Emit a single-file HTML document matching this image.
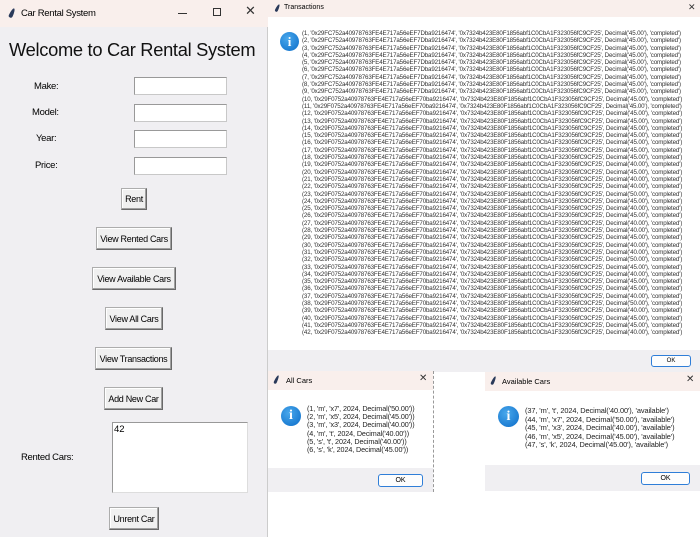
<!DOCTYPE html>
<html><head><meta charset="utf-8">
<style>
*{margin:0;padding:0;box-sizing:border-box}
body{width:700px;height:537px;position:relative;background:#fff;font-family:"Liberation Sans",sans-serif;overflow:hidden;color:#000}
.abs{position:absolute}
.tb{background:#f9efec}
.btn{position:absolute;background:#f0f0f0;border:1px solid #adadad;border-right-color:#696969;border-bottom-color:#696969;box-shadow:inset -1px -1px 0 #a0a0a0,inset 1px 1px 0 #fff;font-size:9px;display:flex;align-items:center;justify-content:center;letter-spacing:-0.3px;white-space:nowrap}
.ent{position:absolute;background:#fff;border:1px solid #c8c8c8;border-top-color:#999;border-left-color:#999}
.lbl{position:absolute;font-size:9.5px;letter-spacing:-0.3px}
.feather{position:absolute;width:4px;height:10px;background:#2a3a5a;border-radius:50% 50% 50% 50%/80% 80% 20% 20%;transform:rotate(25deg)}
.info{position:absolute;border-radius:50%;background:radial-gradient(circle at 40% 35%,#49a8ec,#0b6cc8);color:#fff;font-family:"Liberation Serif",serif;font-weight:bold;display:flex;align-items:center;justify-content:center}
.ok{position:absolute;background:#fdfdfd;border:1.5px solid #2f7ed8;border-radius:3px;font-size:7px;display:flex;align-items:center;justify-content:center}
.tx{position:absolute;left:302px;top:30px;font-size:6.2px;line-height:7.3px;letter-spacing:-0.15px;white-space:pre;color:#333}
.msg{position:absolute;font-size:7.2px;line-height:8.2px;white-space:pre;color:#222;letter-spacing:-0.1px}
</style></head><body>

<div class="abs" style="left:0;top:0;width:268px;height:537px;background:#f0eff2;border-right:1px solid #ccc"></div>
<div class="abs tb" style="left:0;top:0;width:268px;height:27px"></div>
<div class="feather" style="left:10px;top:8px"></div>
<div class="abs" style="left:21px;top:8px;font-size:9.5px;letter-spacing:-0.3px">Car Rental System</div>
<div class="abs" style="left:178px;top:13px;width:9px;height:1px;background:#333"></div>
<div class="abs" style="left:213px;top:8px;width:8px;height:8px;border:1px solid #333"></div>
<div class="abs" style="left:245px;top:3px;font-size:13px;color:#333">✕</div>
<div class="abs" style="left:9px;top:39px;font-size:18.3px;letter-spacing:-0.3px;color:#111">Welcome to Car Rental System</div>

<div class="lbl" style="left:34px;top:81px">Make:</div>
<div class="lbl" style="left:32px;top:107px">Model:</div>
<div class="lbl" style="left:36px;top:133px">Year:</div>
<div class="lbl" style="left:35px;top:160px">Price:</div>
<div class="ent" style="left:134px;top:77px;width:93px;height:18px"></div>
<div class="ent" style="left:134px;top:104px;width:93px;height:18px"></div>
<div class="ent" style="left:134px;top:130px;width:93px;height:18px"></div>
<div class="ent" style="left:134px;top:157px;width:93px;height:18px"></div>

<div class="btn" style="left:121px;top:188px;width:26px;height:22px">Rent</div>
<div class="btn" style="left:96px;top:227px;width:76px;height:23px">View Rented Cars</div>
<div class="btn" style="left:92px;top:267px;width:84px;height:23px">View Available Cars</div>
<div class="btn" style="left:105px;top:307px;width:58px;height:23px">View All Cars</div>
<div class="btn" style="left:95px;top:347px;width:77px;height:23px">View Transactions</div>
<div class="btn" style="left:104px;top:387px;width:59px;height:23px">Add New Car</div>
<div class="lbl" style="left:21px;top:452px">Rented Cars:</div>
<div class="ent" style="left:112px;top:422px;width:136px;height:71px;border-color:#999 #ddd #ddd #999"></div>
<div class="abs" style="left:114px;top:424px;font-size:9.5px">42</div>
<div class="btn" style="left:109px;top:507px;width:50px;height:23px">Unrent Car</div>

<div class="abs" style="left:268px;top:0;width:432px;height:372px;background:#fff"></div>
<div class="abs tb" style="left:268px;top:0;width:432px;height:17px"></div>
<div class="feather" style="left:276px;top:4px;width:3px;height:8px"></div>
<div class="abs" style="left:284px;top:4px;font-size:7px">Transactions</div>
<div class="abs" style="left:688px;top:2px;font-size:9px;color:#333">✕</div>
<div class="info" style="left:280px;top:32px;width:19px;height:19px;font-size:13px">i</div>
<div class="tx">(1, '0x29FC752a40978763FE4E717a56eEF7Dba9216474', '0x7324b423E80F1856abf1C0CbA1F323056fC9CF25', Decimal('45.00'), 'completed')
(2, '0x29FC752a40978763FE4E717a56eEF7Dba9216474', '0x7324b423E80F1856abf1C0CbA1F323056fC9CF25', Decimal('45.00'), 'completed')
(3, '0x29FC752a40978763FE4E717a56eEF7Dba9216474', '0x7324b423E80F1856abf1C0CbA1F323056fC9CF25', Decimal('45.00'), 'completed')
(4, '0x29FC752a40978763FE4E717a56eEF7Dba9216474', '0x7324b423E80F1856abf1C0CbA1F323056fC9CF25', Decimal('45.00'), 'completed')
(5, '0x29FC752a40978763FE4E717a56eEF7Dba9216474', '0x7324b423E80F1856abf1C0CbA1F323056fC9CF25', Decimal('45.00'), 'completed')
(6, '0x29FC752a40978763FE4E717a56eEF7Dba9216474', '0x7324b423E80F1856abf1C0CbA1F323056fC9CF25', Decimal('45.00'), 'completed')
(7, '0x29FC752a40978763FE4E717a56eEF7Dba9216474', '0x7324b423E80F1856abf1C0CbA1F323056fC9CF25', Decimal('45.00'), 'completed')
(8, '0x29FC752a40978763FE4E717a56eEF7Dba9216474', '0x7324b423E80F1856abf1C0CbA1F323056fC9CF25', Decimal('45.00'), 'completed')
(9, '0x29FC752a40978763FE4E717a56eEF7Dba9216474', '0x7324b423E80F1856abf1C0CbA1F323056fC9CF25', Decimal('45.00'), 'completed')
(10, '0x29F0752a40978763FE4E717a56eEF70ba9216474', '0x7324b423E80F1856abf1C0CbA1F323056fC9CF25', Decimal('45.00'), 'completed')
(11, '0x29F0752a40978763FE4E717a56eEF70ba9216474', '0x7324b423E80F1856abf1C0CbA1F323056fC9CF25', Decimal('45.00'), 'completed')
(12, '0x29F0752a40978763FE4E717a56eEF70ba9216474', '0x7324b423E80F1856abf1C0CbA1F323056fC9CF25', Decimal('45.00'), 'completed')
(13, '0x29F0752a40978763FE4E717a56eEF70ba9216474', '0x7324b423E80F1856abf1C0CbA1F323056fC9CF25', Decimal('45.00'), 'completed')
(14, '0x29F0752a40978763FE4E717a56eEF70ba9216474', '0x7324b423E80F1856abf1C0CbA1F323056fC9CF25', Decimal('45.00'), 'completed')
(15, '0x29F0752a40978763FE4E717a56eEF70ba9216474', '0x7324b423E80F1856abf1C0CbA1F323056fC9CF25', Decimal('45.00'), 'completed')
(16, '0x29F0752a40978763FE4E717a56eEF70ba9216474', '0x7324b423E80F1856abf1C0CbA1F323056fC9CF25', Decimal('45.00'), 'completed')
(17, '0x29F0752a40978763FE4E717a56eEF70ba9216474', '0x7324b423E80F1856abf1C0CbA1F323056fC9CF25', Decimal('45.00'), 'completed')
(18, '0x29F0752a40978763FE4E717a56eEF70ba9216474', '0x7324b423E80F1856abf1C0CbA1F323056fC9CF25', Decimal('45.00'), 'completed')
(19, '0x29F0752a40978763FE4E717a56eEF70ba9216474', '0x7324b423E80F1856abf1C0CbA1F323056fC9CF25', Decimal('40.00'), 'completed')
(20, '0x29F0752a40978763FE4E717a56eEF70ba9216474', '0x7324b423E80F1856abf1C0CbA1F323056fC9CF25', Decimal('45.00'), 'completed')
(21, '0x29F0752a40978763FE4E717a56eEF70ba9216474', '0x7324b423E80F1856abf1C0CbA1F323056fC9CF25', Decimal('40.00'), 'completed')
(22, '0x29F0752a40978763FE4E717a56eEF70ba9216474', '0x7324b423E80F1856abf1C0CbA1F323056fC9CF25', Decimal('40.00'), 'completed')
(23, '0x29F0752a40978763FE4E717a56eEF70ba9216474', '0x7324b423E80F1856abf1C0CbA1F323056fC9CF25', Decimal('50.00'), 'completed')
(24, '0x29F0752a40978763FE4E717a56eEF70ba9216474', '0x7324b423E80F1856abf1C0CbA1F323056fC9CF25', Decimal('45.00'), 'completed')
(25, '0x29F0752a40978763FE4E717a56eEF70ba9216474', '0x7324b423E80F1856abf1C0CbA1F323056fC9CF25', Decimal('40.00'), 'completed')
(26, '0x29F0752a40978763FE4E717a56eEF70ba9216474', '0x7324b423E80F1856abf1C0CbA1F323056fC9CF25', Decimal('45.00'), 'completed')
(27, '0x29F0752a40978763FE4E717a56eEF70ba9216474', '0x7324b423E80F1856abf1C0CbA1F323056fC9CF25', Decimal('40.00'), 'completed')
(28, '0x29F0752a40978763FE4E717a56eEF70ba9216474', '0x7324b423E80F1856abf1C0CbA1F323056fC9CF25', Decimal('40.00'), 'completed')
(29, '0x29F0752a40978763FE4E717a56eEF70ba9216474', '0x7324b423E80F1856abf1C0CbA1F323056fC9CF25', Decimal('45.00'), 'completed')
(30, '0x29F0752a40978763FE4E717a56eEF70ba9216474', '0x7324b423E80F1856abf1C0CbA1F323056fC9CF25', Decimal('40.00'), 'completed')
(31, '0x29F0752a40978763FE4E717a56eEF70ba9216474', '0x7324b423E80F1856abf1C0CbA1F323056fC9CF25', Decimal('40.00'), 'completed')
(32, '0x29F0752a40978763FE4E717a56eEF70ba9216474', '0x7324b423E80F1856abf1C0CbA1F323056fC9CF25', Decimal('50.00'), 'completed')
(33, '0x29F0752a40978763FE4E717a56eEF70ba9216474', '0x7324b423E80F1856abf1C0CbA1F323056fC9CF25', Decimal('45.00'), 'completed')
(34, '0x29F0752a40978763FE4E717a56eEF70ba9216474', '0x7324b423E80F1856abf1C0CbA1F323056fC9CF25', Decimal('40.00'), 'completed')
(35, '0x29F0752a40978763FE4E717a56eEF70ba9216474', '0x7324b423E80F1856abf1C0CbA1F323056fC9CF25', Decimal('45.00'), 'completed')
(36, '0x29F0752a40978763FE4E717a56eEF70ba9216474', '0x7324b423E80F1856abf1C0CbA1F323056fC9CF25', Decimal('45.00'), 'completed')
(37, '0x29F0752a40978763FE4E717a56eEF70ba9216474', '0x7324b423E80F1856abf1C0CbA1F323056fC9CF25', Decimal('40.00'), 'completed')
(38, '0x29F0752a40978763FE4E717a56eEF70ba9216474', '0x7324b423E80F1856abf1C0CbA1F323056fC9CF25', Decimal('50.00'), 'completed')
(39, '0x29F0752a40978763FE4E717a56eEF70ba9216474', '0x7324b423E80F1856abf1C0CbA1F323056fC9CF25', Decimal('40.00'), 'completed')
(40, '0x29F0752a40978763FE4E717a56eEF70ba9216474', '0x7324b423E80F1856abf1C0CbA1F323056fC9CF25', Decimal('45.00'), 'completed')
(41, '0x29F0752a40978763FE4E717a56eEF70ba9216474', '0x7324b423E80F1856abf1C0CbA1F323056fC9CF25', Decimal('45.00'), 'completed')
(42, '0x29F0752a40978763FE4E717a56eEF70ba9216474', '0x7324b423E80F1856abf1C0CbA1F323056fC9CF25', Decimal('40.00'), 'completed')</div>
<div class="abs" style="left:268px;top:350px;width:432px;height:22px;background:#f0eff2"></div>
<div class="ok" style="left:651px;top:355px;width:40px;height:12px;font-size:6px">OK</div>

<div class="abs" style="left:268px;top:371px;width:166px;height:121px;background:#fff;border-right:1px dashed #999"></div>
<div class="abs tb" style="left:268px;top:371px;width:165px;height:19px"></div>
<div class="feather" style="left:275px;top:375px;width:3px;height:9px"></div>
<div class="abs" style="left:286px;top:376px;font-size:7.5px">All Cars</div>
<div class="abs" style="left:419px;top:373px;font-size:10px;color:#333">✕</div>
<div class="info" style="left:281px;top:406px;width:20px;height:20px;font-size:14px">i</div>
<div class="msg" style="left:307px;top:405px">(1, 'm', 'x7', 2024, Decimal('50.00'))
(2, 'm', 'x5', 2024, Decimal('45.00'))
(3, 'm', 'x3', 2024, Decimal('40.00'))
(4, 'm', 't', 2024, Decimal('40.00'))
(5, 's', 't', 2024, Decimal('40.00'))
(6, 's', 'k', 2024, Decimal('45.00'))</div>
<div class="abs" style="left:268px;top:468px;width:165px;height:24px;background:#f0eff2"></div>
<div class="ok" style="left:378px;top:474px;width:45px;height:13px">OK</div>

<div class="abs" style="left:485px;top:372px;width:215px;height:119px;background:#fff"></div>
<div class="abs tb" style="left:485px;top:372px;width:215px;height:19px"></div>
<div class="feather" style="left:492px;top:376px;width:3px;height:9px"></div>
<div class="abs" style="left:502px;top:377px;font-size:7.5px">Available Cars</div>
<div class="abs" style="left:686px;top:374px;font-size:10px;color:#333">✕</div>
<div class="info" style="left:498px;top:406px;width:21px;height:21px;font-size:14px">i</div>
<div class="msg" style="left:525px;top:407px;line-height:8.6px;font-size:7.4px">(37, 'm', 't', 2024, Decimal('40.00'), 'available')
(44, 'm', 'x7', 2024, Decimal('50.00'), 'available')
(45, 'm', 'x3', 2024, Decimal('40.00'), 'available')
(46, 'm', 'x5', 2024, Decimal('45.00'), 'available')
(47, 's', 'k', 2024, Decimal('45.00'), 'available')</div>
<div class="abs" style="left:485px;top:465px;width:215px;height:26px;background:#f0eff2"></div>
<div class="ok" style="left:641px;top:472px;width:49px;height:13px">OK</div>
</body></html>
